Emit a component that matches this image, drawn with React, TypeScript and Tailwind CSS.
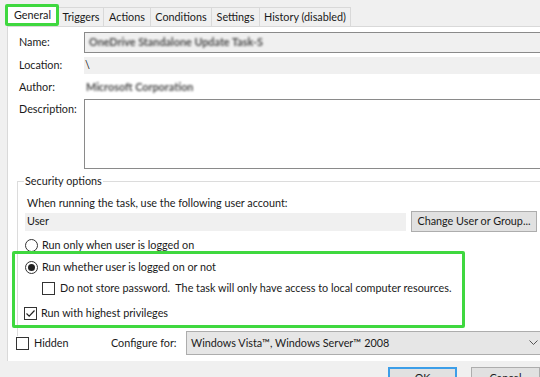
import React from "react";

function Radio({ checked }: { checked?: boolean }) {
  return (
    <div className="w-[13px] h-[13px] rounded-full border border-[#333] bg-white flex items-center justify-center shrink-0">
      {checked && <div className="w-[7px] h-[7px] rounded-full bg-[#222]" />}
    </div>
  );
}

function Check({ checked }: { checked?: boolean }) {
  return (
    <div className="w-[13px] h-[13px] border border-[#333] bg-white flex items-center justify-center shrink-0">
      {checked && (
        <svg width="11" height="11" viewBox="0 0 11 11">
          <path d="M1.5 5.5 L4.2 8.2 L9.5 2.5" fill="none" stroke="#222" strokeWidth="1.2" />
        </svg>
      )}
    </div>
  );
}

export default function App() {
  const tabs: [string, string][] = [
    ["Triggers", "w-[46px]"],
    ["Actions", "w-[48px]"],
    ["Conditions", "w-[62px]"],
    ["Settings", "w-[49px]"],
    ["History (disabled)", "w-[92px]"],
  ];
  return (
    <div
      className="relative w-[540px] h-[377px] overflow-hidden bg-[#f0f0f0] text-[10.8px] text-[#1a1a1a] whitespace-nowrap"
      style={{ fontFamily: 'Lato, "Noto Sans", sans-serif' }}
    >
      {/* tabs */}
      <div className="flex items-end h-[26px] pl-[6px]">
        <div className="relative h-[21px] w-[53px] bg-white flex items-center justify-center">
          <span>General</span>
        </div>
        {tabs.map(([t, w]) => (
          <div
            key={t}
            className={`${w} h-[19px] border border-b-0 border-[#d9d9d9] -ml-px first:ml-0 bg-[#f0f0f0] flex items-center justify-center`}
          >
            {t}
          </div>
        ))}
      </div>

      {/* panel */}
      <div className="ml-[7px] h-[335px] bg-white border-l border-t border-[#d9d9d9] flex flex-col">
        {/* Name */}
        <div className="flex items-center h-[21px] mt-[5px]">
          <div className="w-[76px] pl-[11px]">Name:</div>
          <div className="flex-1 h-[21px] bg-[#f0f0f0] border-y border-l border-[#8a8a8a] flex items-center pl-[4px]">
            <span className="blur-[1.2px] text-[#4a4a4a] font-bold">OneDrive Standalone Update Task-S</span>
          </div>
        </div>
        {/* Location */}
        <div className="flex items-center h-[17px] mt-[4px]">
          <div className="w-[76px] pl-[11px]">Location:</div>
          <div className="flex-1 h-[17px] bg-[#f0f0f0] flex items-center pl-[1px]">\</div>
        </div>
        {/* Author */}
        <div className="flex items-center h-[18px] mt-[4px]">
          <div className="w-[76px] pl-[11px]">Author:</div>
          <div className="flex-1 pl-[2px]">
            <span className="blur-[1.2px] text-[#4a4a4a] font-bold">Microsoft Corporation</span>
          </div>
        </div>
        {/* Description */}
        <div className="flex h-[70px] mt-[3px]">
          <div className="w-[76px] pl-[11px] pt-[2px]">Description:</div>
          <div className="flex-1 h-[70px] bg-white border-y border-l border-[#8a8a8a]" />
        </div>

        {/* Security options group */}
        <div className="ml-[9px] mt-[12px] border-l border-t border-[#dcdcdc] h-[155px] flex flex-col">
          <div className="-mt-[10px] ml-[6px] self-start bg-white px-[1px] h-[18px] leading-[18px]">Security options</div>
          <div className="ml-[9px] mt-[5px] h-[16px] leading-[16px]">When running the task, use the following user account:</div>
          <div className="flex items-center mt-[0px]">
            <div className="w-[381px] h-[18px] ml-[7px] bg-[#f0f0f0] flex items-center pl-[2px]">User</div>
            <div className="ml-[5px] w-[126px] h-[21px] bg-[#e1e1e1] border border-[#adadad] flex items-center justify-center">
              Change User or Group...
            </div>
          </div>
          <div className="flex items-center gap-[4px] ml-[7px] mt-[2px] h-[22px]">
            <Radio />
            <span>Run only when user is logged on</span>
          </div>
          <div className="flex items-center gap-[4px] ml-[7px] mt-[0px] h-[22px]">
            <Radio checked />
            <span>Run whether user is logged on or not</span>
          </div>
          <div className="flex items-center gap-[5px] ml-[24px] h-[21px]">
            <Check />
            <span>Do not store password.&nbsp; The task will only have access to local computer resources.</span>
          </div>
          <div className="flex items-center gap-[4px] ml-[6px] mt-[3px] h-[22px]">
            <Check checked />
            <span>Run with highest privileges</span>
          </div>
        </div>

        {/* bottom row */}
        <div className="flex items-center mt-[-5px] h-[24px]">
          <div className="flex items-center gap-[5px] ml-[8px] w-[95px]">
            <Check />
            <span>Hidden</span>
          </div>
          <div className="w-[75px]">Configure for:</div>
          <div className="flex-1 h-[24px] bg-[#e6e6e6] border-y border-l border-[#adadad] flex items-center pl-[4px] relative">
            <span>Windows Vista™, Windows Server™ 2008</span>
            <svg className="absolute right-[2px] top-[8px]" width="9" height="6" viewBox="0 0 9 6">
              <path d="M0.5 0.5 L4.5 4.5 L8.5 0.5" fill="none" stroke="#555" strokeWidth="1" />
            </svg>
          </div>
        </div>
      </div>

      {/* dialog buttons */}
      <div className="flex mt-[6px] ml-[388px] gap-[14px]">
        <div className="w-[75px] h-[23px] border-2 border-[#3c9ee8] bg-[#e1e1e1] flex justify-center pt-[1px]">OK</div>
        <div className="w-[75px] h-[23px] border border-[#adadad] bg-[#e1e1e1] flex justify-center pt-[2px]">Cancel</div>
      </div>

      {/* green highlights */}
      <div className="absolute left-[5px] top-[4px] w-[54px] h-[22px] border-[3px] border-[#3fd83f] rounded-[2px]" />
      <div className="absolute left-[12px] top-[251px] w-[453px] h-[77px] border-[3px] border-[#3fd83f] rounded-[2px]" />
    </div>
  );
}
